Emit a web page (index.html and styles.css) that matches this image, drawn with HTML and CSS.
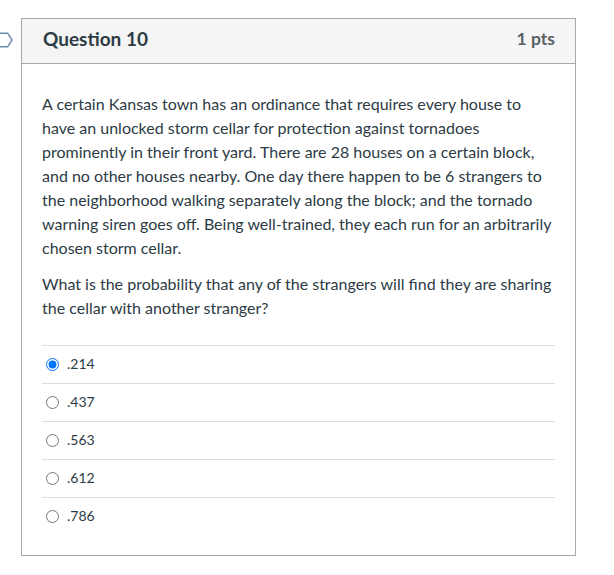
FILE: index.html
```html
<!DOCTYPE html>
<html lang="en">
<head>
<meta charset="utf-8">
<title>Question 10</title>
<link rel="stylesheet" href="styles.css">
</head>
<body>
<div class="page">
  <svg class="flag" width="13" height="16" viewBox="0 0 13 16" aria-hidden="true">
    <path d="M-3 1.2 H7.6 L12 8 L7.6 14.8 H-3" fill="none" stroke="#6a8aa8" stroke-width="1.4" stroke-linejoin="round"/>
  </svg>
  <div class="question">
    <div class="q-header">
      <span class="q-title">Question 10</span>
      <span class="q-points">1 pts</span>
    </div>
    <div class="q-body">
      <p>A certain Kansas town has an ordinance that requires every house to have an unlocked storm cellar for protection against tornadoes prominently in their front yard. There are 28 houses on a certain block, and no other houses nearby. One day there happen to be 6 strangers to the neighborhood walking separately along the block; and the tornado warning siren goes off. Being well-trained, they each run for an arbitrarily chosen storm cellar.</p>
      <p>What is the probability that any of the strangers will find they are sharing the cellar with another stranger?</p>
      <div class="answers">
        <label class="answer"><input type="radio" name="q10" checked><span class="answer-text">.214</span></label>
        <label class="answer"><input type="radio" name="q10"><span class="answer-text">.437</span></label>
        <label class="answer"><input type="radio" name="q10"><span class="answer-text">.563</span></label>
        <label class="answer"><input type="radio" name="q10"><span class="answer-text">.612</span></label>
        <label class="answer"><input type="radio" name="q10"><span class="answer-text">.786</span></label>
      </div>
    </div>
  </div>
</div>
</body>
</html>
```
FILE: styles.css
```css
html, body {
  margin: 0;
  padding: 0;
  background: #ffffff;
}
body {
  font-family: Lato, "Noto Sans", sans-serif;
  color: #2d3b45;
}
.page {
  display: flex;
  align-items: flex-start;
  gap: 8px;
  padding-top: 18px;
}
.flag {
  flex: none;
  margin-top: 14px;
  overflow: visible;
}
.question {
  width: 553px;
  border: 1px solid #a8a8a8;
}
.q-header {
  display: flex;
  justify-content: space-between;
  align-items: center;
  height: 39px;
  padding: 0 20px 5px 21px;
  background: #f5f5f5;
  border-bottom: 1px solid #a8a8a8;
}
.q-title {
  font-weight: 700;
  font-size: 19px;
  color: #2d3b45;
}
.q-points {
  font-weight: 700;
  font-size: 17.5px;
  color: #5a5f63;
}
.q-body {
  padding: 28px 20px 20px 20px;
}
.q-body p {
  margin: 0 0 12px 0;
  font-size: 16px;
  line-height: 24px;
}
.answers {
  margin-top: 25px;
}
.answer {
  display: flex;
  align-items: center;
  height: 37px;
  border-top: 1px solid #dcdcdc;
  font-size: 14px;
}
.answer input {
  margin: 0 8px 0 4px;
  width: 13px;
  height: 13px;
}
.answer-text {
  margin-bottom: 3px;
}
```
